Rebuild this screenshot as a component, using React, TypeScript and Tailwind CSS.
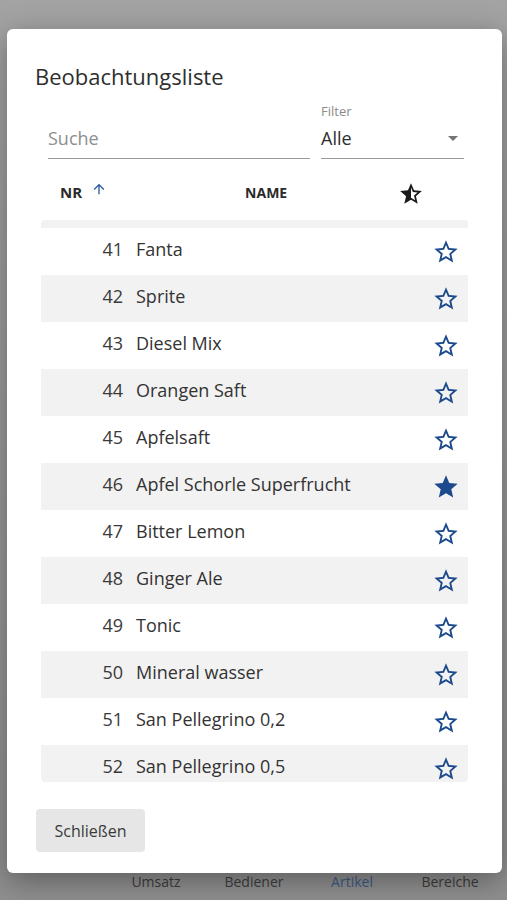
const items: { nr: number; name: string; fav?: boolean }[] = [
  { nr: 40, name: "Coca Cola Zero" },
  { nr: 41, name: "Fanta" },
  { nr: 42, name: "Sprite" },
  { nr: 43, name: "Diesel Mix" },
  { nr: 44, name: "Orangen Saft" },
  { nr: 45, name: "Apfelsaft" },
  { nr: 46, name: "Apfel Schorle Superfrucht", fav: true },
  { nr: 47, name: "Bitter Lemon" },
  { nr: 48, name: "Ginger Ale" },
  { nr: 49, name: "Tonic" },
  { nr: 50, name: "Mineral wasser" },
  { nr: 51, name: "San Pellegrino 0,2" },
  { nr: 52, name: "San Pellegrino 0,5" },
  { nr: 53, name: "Red Bull" },
];

const StarBorder = ({ className }: { className?: string }) => (
  <svg viewBox="0 0 24 24" className={className} fill="currentColor">
    <path d="M22 9.24l-7.19-.62L12 2 9.19 8.63 2 9.24l5.46 4.73L5.82 21 12 17.27 18.18 21l-1.63-7.03L22 9.24zM12 15.4l-3.76 2.27 1-4.28-3.32-2.88 4.38-.38L12 6.1l1.71 4.04 4.38.38-3.32 2.88 1 4.28L12 15.4z" />
  </svg>
);

const StarFilled = ({ className }: { className?: string }) => (
  <svg viewBox="0 0 24 24" className={className} fill="currentColor">
    <path d="M12 17.27L18.18 21l-1.64-7.03L22 9.24l-7.19-.61L12 2 9.19 8.63 2 9.24l5.46 4.73L5.82 21z" />
  </svg>
);

const StarHalf = ({ className }: { className?: string }) => (
  <svg viewBox="0 0 24 24" className={className} fill="currentColor">
    <path d="M22 9.24l-7.19-.62L12 2 9.19 8.63 2 9.24l5.46 4.73L5.82 21 12 17.27 18.18 21l-1.63-7.03L22 9.24zM12 15.4V6.1l1.71 4.04 4.38.38-3.32 2.88 1 4.28L12 15.4z" />
  </svg>
);

export default function App() {
  return (
    <div
      className="relative h-[900px] w-[507px] overflow-hidden bg-[#a2a2a2]"
      style={{ fontFamily: '"Open Sans", "Noto Sans", sans-serif' }}
    >
      {/* App im Hintergrund (abgedunkelt) */}
      <div className="flex h-full flex-col justify-between bg-gradient-to-b from-[#a3a3a3] to-[#8f8f8f]">
        <div className="flex items-center justify-between pl-[62px] pr-[20px] pt-[25px]">
          <span className="text-[20px] font-bold text-[#4a4a4a]">
            <span className="text-[#1d3f73]">Umsatz</span> aktuelle Artikel
          </span>
          <div className="flex gap-[30px] text-[#555]">
            <span className="h-[22px] w-[22px] rounded-full border-[3px] border-[#666]" />
            <span className="h-[22px] w-[22px] rounded-t-full bg-[#666]" />
          </div>
        </div>
        <div className="flex pb-[8px] pl-[9px] text-[14px] text-[#3c3c3c]">
          <span className="w-[98px]" />
          <span className="w-[98px] text-center">Umsatz</span>
          <span className="w-[98px] text-center">Bediener</span>
          <span className="w-[98px] text-center text-[#3b5a86]">Artikel</span>
          <span className="w-[98px] text-center">Bereiche</span>
        </div>
      </div>

      {/* Dialog */}
      <div className="absolute left-[7px] top-[29px] flex h-[844px] w-[495px] flex-col rounded-md bg-white shadow-[0_8px_30px_rgba(0,0,0,0.35)]">
        <h2 className="pl-[28px] pt-[32px] text-[22px] leading-[30px] text-[#2e2e2e]">Beobachtungsliste</h2>

        <div className="ml-[41px] mt-[12px] flex gap-[11px]">
          <div className="flex w-[262px] flex-col border-b border-[#9a9a9a]">
            <span className="h-[17px]" />
            <span className="pb-[8px] pt-[6px] text-[18px] leading-[24px] text-[#8e8e8e]">Suche</span>
          </div>
          <div className="flex w-[143px] flex-col border-b border-[#9a9a9a]">
            <span className="h-[17px] text-[13px] leading-[17px] text-[#8a8a8a]">Filter</span>
            <div className="flex items-center justify-between pb-[8px] pt-[6px]">
              <span className="text-[18px] leading-[24px] text-[#2e2e2e]">Alle</span>
              <span className="mr-[6px] h-0 w-0 border-x-[5px] border-t-[5px] border-x-transparent border-t-[#757575]" />
            </div>
          </div>
        </div>

        <div className="mx-[34px] mt-[5px] flex h-[56px] items-center text-[14px] font-bold text-[#2a2a2a]">
          <span className="ml-[19px] text-[15px]">NR</span>
          <svg viewBox="0 0 24 24" className="ml-[9px] h-[16px] w-[16px] -translate-y-[3px] text-[#2c5aa0]" fill="currentColor">
            <path d="M4 12l1.41 1.41L11 7.83V20h2V7.83l5.58 5.59L20 12l-8-8-8 8z" />
          </svg>
          <span className="ml-[138px]">NAME</span>
          <StarHalf className="ml-[111px] h-[26px] w-[26px] translate-y-[2px] text-[#1a1a1a]" />
        </div>

        <div className="mx-[34px] h-[562px] overflow-hidden rounded-sm">
          <div className="-mt-[39px]">
            {items.map((it, i) => (
              <div
                key={it.nr}
                className={`flex h-[47px] items-center pr-[8px] ${i % 2 === 0 ? "bg-[#f2f2f2]" : "bg-white"}`}
              >
                <span className="w-[82px] pb-[4px] text-right text-[18px] text-[#3a3a3a]">{it.nr}</span>
                <span className="ml-[13px] flex-1 pb-[4px] text-[18px] text-[#333]">{it.name}</span>
                {it.fav ? (
                  <StarFilled className="h-[28px] w-[28px] text-[#1c4a8c]" />
                ) : (
                  <StarBorder className="h-[28px] w-[28px] text-[#1c4a8c]" />
                )}
              </div>
            ))}
          </div>
        </div>

        <div className="pl-[29px] pt-[27px]">
          <button className="h-[43px] w-[109px] rounded-[4px] bg-[#e6e6e6] text-[16px] leading-[20px] text-[#3a3a3a]">
            Schließen
          </button>
        </div>
      </div>
    </div>
  );
}
